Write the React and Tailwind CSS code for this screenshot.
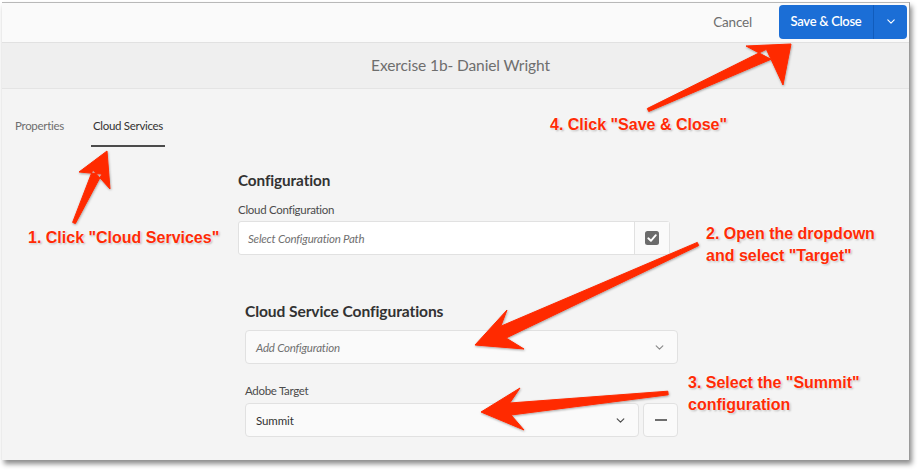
import React from "react";

const UI = { fontFamily: "Lato, 'Open Sans', sans-serif" };
const NOTE = { fontFamily: "'Liberation Sans', Arial, sans-serif" };

function arrowPoints(tail, tip, b1, b2, w0, w1) {
  const dx = tip[0] - tail[0];
  const dy = tip[1] - tail[1];
  const len = Math.hypot(dx, dy);
  const ux = dx / len;
  const uy = dy / len;
  const px = -uy;
  const py = ux;
  const bc = [(b1[0] + b2[0]) / 2, (b1[1] + b2[1]) / 2];
  const hl = Math.hypot(tip[0] - bc[0], tip[1] - bc[1]);
  const j = [tip[0] - ux * hl * 0.72, tip[1] - uy * hl * 0.72];
  const pts = [
    tip,
    b1,
    [j[0] + px * w1, j[1] + py * w1],
    [tail[0] + px * w0, tail[1] + py * w0],
    [tail[0] - px * w0, tail[1] - py * w0],
    [j[0] - px * w1, j[1] - py * w1],
    b2,
  ];
  const side = (p) => (p[0] - tail[0]) * py - (p[1] - tail[1]) * px;
  if (side(b1) < 0) {
    pts[1] = b2;
    pts[6] = b1;
  }
  return pts.map((p) => p[0].toFixed(1) + "," + p[1].toFixed(1)).join(" ");
}

const ARROWS = [
  { tail: [74, 223], tip: [107, 151], b1: [79, 172], b2: [110, 189], w0: 1.5, w1: 5 },
  { tail: [648, 110], tip: [791, 44], b1: [746, 46], b2: [783, 85], w0: 1.6, w1: 5.5 },
  { tail: [698, 244], tip: [475, 345], b1: [507, 310], b2: [524, 349], w0: 1.8, w1: 6.5 },
  { tail: [668, 393], tip: [481, 412], b1: [520, 388], b2: [524, 430], w0: 1.8, w1: 6 },
];

function Chevron({ className }) {
  return (
    <svg width="10" height="6" viewBox="0 0 10 6" className={className}>
      <path d="M1 1 L5 5 L9 1" fill="none" stroke="currentColor" strokeWidth="1.4" strokeLinecap="round" strokeLinejoin="round" />
    </svg>
  );
}

function Note({ children, className }) {
  return (
    <div
      style={NOTE}
      className={
        "absolute text-[16px] font-bold leading-[22px] text-[#ff2b06] whitespace-nowrap [text-shadow:0_0_2px_#fff,0_0_3px_#fff,1px_1px_2px_rgba(0,0,0,0.35)] " +
        className
      }
    >
      {children}
    </div>
  );
}

export default function App() {
  return (
    <div className="relative w-[922px] h-[472px] bg-white overflow-hidden">
      <div className="pt-[2px] pl-[2px]">
        <div
          style={UI}
          className="w-[908px] h-[458px] bg-[#f4f4f4] border-t border-[#b8b8b8] border-r border-r-[#9a9a9a] shadow-[2px_4px_5px_rgba(0,0,0,0.45)] flex flex-col"
        >
          {/* top action bar */}
          <div className="h-[40px] bg-[#fafafa] border-b border-[#e1e1e1] flex items-center justify-end pr-[2px]">
            <span className="text-[13.5px] tracking-[-0.2px] text-[#6e6e6e] mr-[27px]">Cancel</span>
            <div className="h-[34px] flex rounded-[4px] bg-[#1b6ed6] text-white overflow-hidden mb-[2px]">
              <div className="w-[94px] flex items-center justify-center text-[13px] tracking-[-0.3px] font-semibold">Save &amp; Close</div>
              <div className="w-[34px] border-l border-[#115cbc] flex items-center justify-center">
                <Chevron className="text-white w-[8px] h-[5px]" />
              </div>
            </div>
          </div>
          {/* title bar */}
          <div className="h-[46px] bg-[#efefef] border-b border-[#e4e4e4] flex items-center justify-center pl-[10px]">
            <span className="text-[15.5px] tracking-[-0.1px] text-[#6e6e6e]">Exercise 1b- Daniel Wright</span>
          </div>
          {/* content */}
          <div className="flex-1 flex flex-col">
            <div className="flex pl-[11px] pt-[28px] text-[11.5px] tracking-[-0.3px]">
              <div className="px-[2px] pb-[11px] text-[#6e6e6e]">Properties</div>
              <div className="ml-[25px] px-[2px] pb-[11px] text-[#323232] border-b-2 border-[#4b4b4b]">Cloud Services</div>
            </div>
            <div className="ml-[236px] mt-[23px] w-[432px]">
              <div className="text-[15.3px] font-bold tracking-[-0.1px] text-[#323232] leading-[20px]">Configuration</div>
              <div className="mt-[12px] text-[11.5px] tracking-[-0.3px] text-[#4b4b4b] leading-[16px]">Cloud Configuration</div>
              <div className="mt-[3px] h-[34px] flex bg-white border border-[#e1e1e1] rounded-[3px]">
                <div className="flex-1 flex items-center pl-[9px] text-[11.5px] tracking-[-0.2px] italic text-[#707070]">Select Configuration Path</div>
                <div className="w-[35px] bg-[#fafafa] border-l border-[#e1e1e1] flex items-center justify-center">
                  <svg width="14" height="14" viewBox="0 0 14 14">
                    <rect x="0" y="0" width="14" height="14" rx="2.5" fill="#6b6b6b" />
                    <path d="M3.3 7.3 L5.9 9.8 L10.8 4.2" fill="none" stroke="#fff" strokeWidth="1.9" strokeLinecap="round" strokeLinejoin="round" />
                  </svg>
                </div>
              </div>
            </div>
            <div className="ml-[243px] mt-[46px] w-[433px]">
              <div className="text-[15.6px] font-bold tracking-[-0.1px] text-[#323232] leading-[20px]">Cloud Service Configurations</div>
              <div className="mt-[9px] h-[34px] flex items-center justify-between bg-[#fafafa] border border-[#e1e1e1] rounded-[4px] pl-[10px] pr-[13px]">
                <span className="text-[11.5px] tracking-[-0.2px] italic text-[#707070]">Add Configuration</span>
                <Chevron className="text-[#8a8a8a] w-[9px] h-[5px]" />
              </div>
              <div className="mt-[19px] text-[11.5px] tracking-[-0.3px] text-[#4b4b4b] leading-[16px]">Adobe Target</div>
              <div className="mt-[4px] flex gap-[4px]">
                <div className="flex-1 h-[34px] flex items-center justify-between bg-[#fafafa] border border-[#e1e1e1] rounded-[4px] pl-[10px] pr-[13px]">
                  <span className="text-[11.5px] tracking-[-0.1px] text-[#323232]">Summit</span>
                  <Chevron className="text-[#4b4b4b] w-[9px] h-[5px]" />
                </div>
                <div className="w-[35px] h-[34px] flex items-center justify-center bg-[#fafafa] border border-[#e1e1e1] rounded-[4px]">
                  <div className="w-[12px] h-[2px] bg-[#6e6e6e]" />
                </div>
              </div>
            </div>
          </div>
        </div>
      </div>

      {/* annotation overlay */}
      <svg className="absolute left-0 top-0 pointer-events-none" width="922" height="472" viewBox="0 0 922 472">
        <defs>
          <filter id="ds" x="-20%" y="-20%" width="140%" height="140%">
            <feDropShadow dx="0.5" dy="1" stdDeviation="0.8" floodColor="#000" floodOpacity="0.35" />
          </filter>
        </defs>
        {ARROWS.map((a, i) => (
          <polygon
            key={i}
            points={arrowPoints(a.tail, a.tip, a.b1, a.b2, a.w0, a.w1)}
            fill="#ff2a00"
            stroke="#ff2a00"
            strokeWidth="1"
            strokeLinejoin="round"
            filter="url(#ds)"
          />
        ))}
      </svg>
      <Note className="left-[28px] top-[227px]">1. Click "Cloud Services"</Note>
      <Note className="left-[550px] top-[114px]">4. Click "Save &amp; Close"</Note>
      <Note className="left-[706px] top-[223px]">
        2. Open the dropdown
        <br />
        and select "Target"
      </Note>
      <Note className="left-[688px] top-[372px]">
        3. Select the "Summit"
        <br />
        configuration
      </Note>
    </div>
  );
}
